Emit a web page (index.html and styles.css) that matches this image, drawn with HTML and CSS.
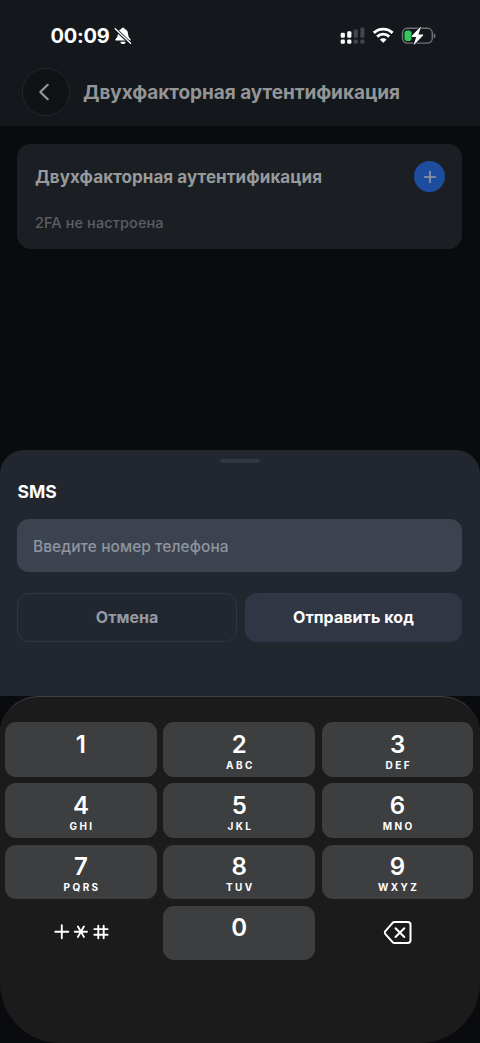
FILE: index.html
```html
<!DOCTYPE html>
<html lang="ru">
<head>
<meta charset="utf-8">
<meta name="viewport" content="width=device-width, initial-scale=1">
<title>Двухфакторная аутентификация</title>
<link rel="stylesheet" href="styles.css">
</head>
<body>
<div class="screen">
  <header class="top">
    <div class="status">
      <span class="time">00:09</span>
      <svg class="bell" width="18" height="18" viewBox="0 0 18 18">
        <path fill="#fff" d="M9 .8c.9 0 1.600.5 1.700 1.200 2.200.7 3.300 2.500 3.400 5 .1 2.400.9 3.600 2.200 4.900.7.8.4 1.700-.6 1.700H2.300c-1 0-1.300-.9-.6-1.700C3 10.600 3.800 9.400 3.900 7 4 4.500 5.100 2.700 7.300 2 7.400 1.300 8.100.8 9 .8z"/>
        <path fill="#fff" d="M6.300 14.700h5.400c-.2 1.500-1.300 2.300-2.700 2.300s-2.500-.8-2.700-2.300z"/>
        <path stroke="#14181c" stroke-width="3.200" d="M0 .8 17 17"/>
        <path stroke="#fff" stroke-width="1.300" stroke-linecap="round" d="M1.200 1.700 16.600 16.300"/>
      </svg>
      <svg class="signals" width="98" height="18" viewBox="0 0 98 18">
        <g fill="#fff">
          <rect x=".7" y="5.800" width="4.200" height="5" rx="1.300"/><rect x="7.200" y="4.300" width="4.200" height="6.500" rx="1.300"/>
          <rect x=".7" y="12.500" width="4.200" height="4.300" rx="1.300"/><rect x="7.200" y="12.500" width="4.200" height="4.300" rx="1.300"/>
        </g>
        <g fill="#42454a">
          <rect x="13.700" y="2.400" width="4.200" height="8.400" rx="1.300"/><rect x="20.300" y=".6" width="4.200" height="10.200" rx="1.300"/>
          <rect x="13.700" y="12.500" width="4.200" height="4.300" rx="1.300"/><rect x="20.300" y="12.500" width="4.200" height="4.300" rx="1.300"/>
        </g>
        <g fill="none" stroke="#fff" stroke-width="2.900">
          <path d="M33.800 5.900c5.200-5.100 13.600-5.100 18.800 0"/>
          <path d="M37.200 9.600c3.300-3.300 8.700-3.300 12 0"/>
        </g>
        <path fill="#fff" stroke="#fff" stroke-width=".6" stroke-linejoin="round" d="M43.200 15.600 40.200 12.600c1.700-1.500 4.300-1.500 6 0z"/>
        <rect x="62.500" y="1.300" width="29.800" height="14.800" rx="4.800" fill="none" stroke="#6e7276" stroke-width="1.400"/>
        <path fill="#6e7276" d="M93.700 6.200c2.400.5 2.400 4.500 0 5z"/>
        <rect x="64.400" y="3.400" width="7.200" height="10.600" rx="3.100" fill="#34c759"/>
        <path fill="#fff" stroke="#14181c" stroke-width="1.500" paint-order="stroke" d="M79.800.4 71.600 9c-.5.6-.2 1 .4 1h4.200l-2.300 6.900c-.2.7.3.9.8.4L83 8.600c.5-.6.2-1-.4-1h-4.200l2.300-6.800c.2-.7-.4-.9-.9-.4z"/>
      </svg>
    </div>
    <div class="nav">
      <button class="back" aria-label="Назад"><svg width="12" height="18" viewBox="0 0 12 18"><path d="M9.700 1.800 2.300 9l7.400 7.200" fill="none" stroke="#969799" stroke-width="2.200" stroke-linecap="round" stroke-linejoin="round"/></svg></button>
      <h1 class="title">Двухфакторная аутентификация</h1>
    </div>
  </header>
  <main class="content">
    <section class="card">
      <div class="card-head">
        <h2 class="card-title">Двухфакторная аутентификация</h2>
        <button class="add" aria-label="Добавить"><svg width="14" height="14" viewBox="0 0 14 14"><path d="M7 1.600v10.800M1.600 7h10.800" stroke="#989ba2" stroke-width="1.600" stroke-linecap="round"/></svg></button>
      </div>
      <p class="card-note">2FA не настроена</p>
    </section>
  </main>
  <section class="sheet">
    <div class="grabber"></div>
    <h2 class="sheet-title">SMS</h2>
    <div class="field"><span class="placeholder">Введите номер телефона</span></div>
    <div class="actions">
      <button class="btn cancel"><span>Отмена</span></button>
      <button class="btn send"><span>Отправить код</span></button>
    </div>
  </section>
  <section class="keyboard">
    <div class="keys">
      <div class="key"><b>1</b></div>
      <div class="key"><b>2</b><small>ABC</small></div>
      <div class="key"><b>3</b><small>DEF</small></div>
      <div class="key"><b>4</b><small>GHI</small></div>
      <div class="key"><b>5</b><small>JKL</small></div>
      <div class="key"><b>6</b><small>MNO</small></div>
      <div class="key"><b>7</b><small>PQRS</small></div>
      <div class="key"><b>8</b><small>TUV</small></div>
      <div class="key"><b>9</b><small>WXYZ</small></div>
      <div class="key plain">
        <svg width="56" height="18" viewBox="0 0 56 18" fill="none" stroke="#fff" stroke-width="1.900" stroke-linecap="round"><path d="M8.800 1.200v13M2.300 7.700h13M21.800 7.700h12.200M24.900 2.500l6 10.400M30.900 2.500l-6 10.400M45.300 1.800v12.400M50.700 1.800v12.400M41.300 5.100h13.300M41.300 10.800h13.300"/></svg>
      </div>
      <div class="key"><b>0</b></div>
      <div class="key plain">
        <svg width="30" height="26" viewBox="0 0 30 26" fill="none" stroke="#fff" stroke-width="2" stroke-linecap="round" stroke-linejoin="round"><path d="M11.600 2h13.200a2.700 2.700 0 0 1 2.700 2.700v15.600a2.700 2.700 0 0 1-2.700 2.700H11.600a3 3 0 0 1-2-.8l-7-7.800a2.500 2.500 0 0 1 0-3.600l7-8a3 3 0 0 1 2-.8z"/><path d="m12.500 8.200 8.800 8.800m0-8.800-8.800 8.800"/></svg>
      </div>
    </div>
  </section>
</div>
</body>
</html>
```
FILE: styles.css
```css
* { box-sizing: border-box; }
body { margin: 0; background: #0a0b0f; font-family: Inter, "Liberation Sans", sans-serif; }
h1, h2, p { margin: 0; }
button { font: inherit; padding: 0; border: 0; }
svg { display: block; flex: none; }
.screen { width: 480px; height: 1043px; display: flex; flex-direction: column; background: #0a0b0f; overflow: hidden; }
.top { height: 126px; flex: none; background: #14181c; }
.status { height: 68px; padding: 3px 42px 0 50.500px; display: flex; align-items: center; }
.time { color: #fff; font-size: 20px; font-weight: 700; line-height: 24px; letter-spacing: -.25px; }
.bell { margin-left: 4.300px; }
.signals { margin-left: auto; }
.nav { display: flex; align-items: center; padding-left: 22px; gap: 13px; }
.back { width: 48px; height: 48px; border-radius: 50%; background: #101215; border: 1px solid #23262a; display: flex; align-items: center; justify-content: center; padding-right: 5px; }
.title { color: #939597; font-size: 19px; font-weight: 700; line-height: 26px; letter-spacing: -.06px; padding-top: 2px; white-space: nowrap; }
.content { height: 324px; flex: none; padding: 18px 18px 0 17px; }
.card { height: 105px; border-radius: 14px; background: #1b1f23; padding: 17px 17px 17px 18px; }
.card-head { display: flex; align-items: center; justify-content: space-between; height: 31px; }
.card-title { color: #98999b; font-size: 17px; font-weight: 700; line-height: 24px; letter-spacing: .07px; padding-top: 1px; white-space: nowrap; }
.add { width: 31px; height: 31px; border-radius: 50%; background: #1e4da0; display: flex; align-items: center; justify-content: center; }
.card-note { margin-top: 20px; color: #5b5e67; font-size: 14.500px; font-weight: 500; line-height: 22px; letter-spacing: .1px; }
.sheet { height: 246px; flex: none; background: #22272f; border-radius: 24px 24px 0 0; padding: 9px 18px 0 17px; }
.grabber { width: 40px; height: 4px; border-radius: 2px; background: #313842; margin: 0 auto; }
.sheet-title { margin-top: 17px; padding-left: .5px; color: #fff; font-size: 17.500px; font-weight: 700; line-height: 24px; }
.field { margin-top: 15px; height: 53px; border-radius: 12px; background: #3c434f; padding: 1px 0 0 16px; display: flex; align-items: center; }
.placeholder { color: #8f94a1; font-size: 15.500px; font-weight: 500; letter-spacing: .05px; }
.actions { margin-top: 21px; display: grid; grid-template-columns: 220px 217px; gap: 8px; }
.btn { height: 49px; border-radius: 12px; font-size: 16px; font-weight: 700; padding-bottom: 2px; }
.cancel { background: transparent; border: 1px solid #303640; color: #9599a5; }
.send { background: #303643; color: #fff; letter-spacing: .07px; }
.keyboard { height: 347px; flex: none; background: #1b1b1c; border-radius: 38px 38px 60px 60px; border-top: 1px solid #404143; padding: 25.400px 6.600px 0 5px; }
.keys { display: grid; grid-template-columns: repeat(3, 1fr); grid-auto-rows: 54.500px; gap: 6.600px; }
.key { background: #3d3e3f; border-radius: 11px; color: #fff; display: flex; flex-direction: column; align-items: center; padding-top: 8.600px; }
.key b { font-size: 24px; font-weight: 600; line-height: 28px; }
.key small { margin-top: -1px; font-size: 10px; font-weight: 700; line-height: 14px; letter-spacing: 2.400px; margin-right: -2.400px; }
.plain { background: transparent; justify-content: center; padding: 0; }
```
